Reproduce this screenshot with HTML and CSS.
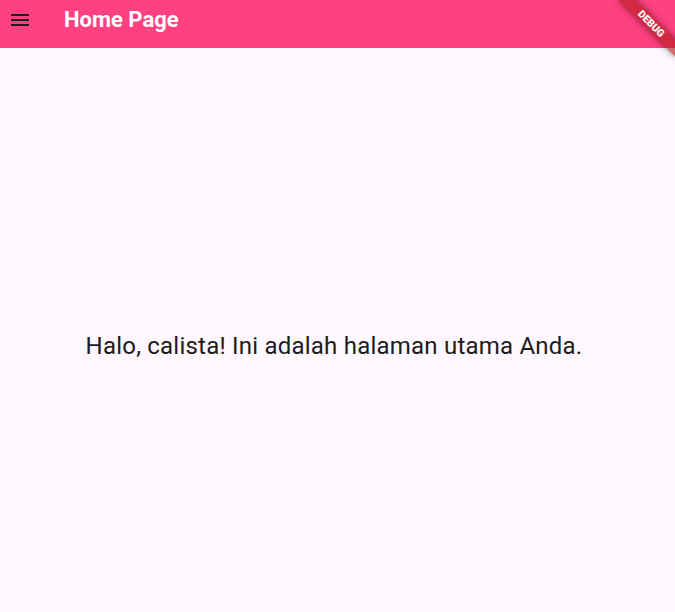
FILE: index.html
```html
<!DOCTYPE html>
<html lang="id">
<head>
<meta charset="utf-8">
<title>Home Page</title>
<link rel="stylesheet" href="styles.css">
</head>
<body>
<div class="app">
  <header class="appbar">
    <button class="menu-btn" aria-label="Menu">
      <svg width="24" height="24" viewBox="0 0 24 24"><path d="M3 18h18v-2H3v2zm0-5h18v-2H3v2zm0-7v2h18V6H3z" fill="#1d1b20"/></svg>
    </button>
    <h1 class="title">Home Page</h1>
  </header>
  <main class="content">
    <p class="greeting">Halo, calista! Ini adalah halaman utama Anda.</p>
  </main>
  <div class="banner-clip"><div class="banner">DEBUG</div></div>
</div>
</body>
</html>
```
FILE: styles.css
```css
* { box-sizing: border-box; }
html, body { margin: 0; padding: 0; height: 100%; }
body {
  background: #fef7fd;
  font-family: Roboto, "Noto Sans", sans-serif;
  overflow: hidden;
}
.app {
  position: relative;
  height: 612px;
  display: flex;
  flex-direction: column;
}
.appbar {
  height: 48px;
  background: #ff4081;
  display: flex;
  align-items: center;
  flex-shrink: 0;
}
.menu-btn {
  width: 24px;
  height: 24px;
  margin: 0 0 8px 8px;
  padding: 0;
  border: 0;
  background: none;
  display: flex;
}
.title {
  margin: 0 0 8px 32px;
  font-size: 22px;
  font-weight: 700;
  color: #ffffff;
  line-height: 28px;
}
.content {
  flex: 1;
  display: flex;
  align-items: center;
  justify-content: center;
  padding-top: 32px;
  padding-right: 7px;
}
.greeting {
  margin: 0;
  font-size: 24px;
  letter-spacing: 0.22px;
  line-height: 28px;
  color: #1d1b20;
}
.banner-clip {
  position: absolute;
  top: 0;
  right: 0;
  width: 80px;
  height: 80px;
  overflow: hidden;
  pointer-events: none;
}
.banner {
  position: absolute;
  left: 16px;
  top: 18px;
  width: 80px;
  height: 12px;
  transform: rotate(45deg);
  background: rgba(183, 28, 28, 0.63);
  box-shadow: 0 0 6px rgba(0, 0, 0, 0.5);
  color: #fff;
  font-size: 10.2px;
  font-weight: 900;
  line-height: 12px;
  text-align: center;
}
```
